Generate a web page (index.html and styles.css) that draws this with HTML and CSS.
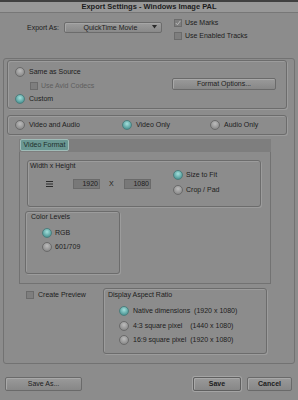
FILE: index.html
```html
<!DOCTYPE html>
<html>
<head>
	<title>Export Settings</title>
	<meta charset="utf-8" />
    <link rel="stylesheet" href="styles.css">
</head>
<body>
    <div class="title">Export Settings - Windows Image PAL</div>

    <div class="head">
        <div class="lbl">Export As:</div>
        <div class="select">
            <span class="select-text">QuickTime Movie</span>
            <svg class="arrow" width="5" height="4" viewBox="0 0 5 4"><path d="M0 0 H5 L2.5 3.5 Z" fill="#2a2a2a"/></svg>
        </div>
        <div class="checks">
            <div class="row">
                <span class="cb on"><svg width="6" height="6" viewBox="0 0 6 6"><path d="M0.8 3 L2.4 4.8 L5.4 0.8" fill="none" stroke="#b9b9b9" stroke-width="1"/></svg></span>
                Use Marks
            </div>
            <div class="row"><span class="cb"></span>Use Enabled Tracks</div>
        </div>
    </div>

    <div class="panel">
        <div class="box source">
            <div class="opts">
                <div class="row"><span class="radio"></span>Same as Source</div>
                <div class="row sub off"><span class="cb"></span>Use Avid Codecs</div>
                <div class="row"><span class="radio on"></span>Custom</div>
            </div>
            <div class="btn options">Format Options...</div>
        </div>

        <div class="box tracks">
            <div class="row"><span class="radio"></span>Video and Audio</div>
            <div class="row"><span class="radio on"></span>Video Only</div>
            <div class="row"><span class="radio"></span>Audio Only</div>
        </div>

        <div class="tabs"><div class="tab">Video Format</div></div>
        <div class="tabbody">
            <div class="box wh">
                <div class="wh-left">
                    <div class="cap">Width x Height</div>
                    <div class="sizes">
                        <svg class="lock" width="7" height="6" viewBox="0 0 7 6"><path d="M0 0.5 H7 M0 3 H7 M0 5.5 H7" stroke="#2a2a2a" stroke-width="1"/></svg>
                        <div class="num">1920</div>
                        <span class="x">X</span>
                        <div class="num">1080</div>
                    </div>
                </div>
                <div class="wh-right">
                    <div class="row"><span class="radio on"></span>Size to Fit</div>
                    <div class="row"><span class="radio"></span>Crop / Pad</div>
                </div>
            </div>

            <div class="box levels">
                <div class="cap">Color Levels</div>
                <div class="list">
                    <div class="row"><span class="radio on"></span>RGB</div>
                    <div class="row"><span class="radio"></span>601/709</div>
                </div>
            </div>
        </div>

        <div class="lower">
            <div class="preview">
                <div class="row"><span class="cb"></span>Create Preview</div>
            </div>
            <div class="box aspect">
                <div class="cap">Display Aspect Ratio</div>
                <div class="list">
                    <div class="row"><span class="radio on"></span><span class="pre">Native dimensions  (1920 x 1080)</span></div>
                    <div class="row"><span class="radio"></span><span class="pre">4:3 square pixel    (1440 x 1080)</span></div>
                    <div class="row"><span class="radio"></span><span class="pre">16:9 square pixel  (1920 x 1080)</span></div>
                </div>
            </div>
        </div>
    </div>

    <div class="foot">
        <div class="btn save-as">Save As...</div>
        <div class="btn save">Save</div>
        <div class="btn cancel">Cancel</div>
    </div>
</body>
</html>
```

FILE: styles.css
```css
body {
    margin: 0;
    width: 298px;
    height: 400px;
    overflow: hidden;
    background: #8c8c8c;
    color: #1c1c1c;
    font-family: "Liberation Sans", Arial, sans-serif;
    font-size: 7px;
    line-height: 8px;
}

/* title bar */
.title {
    height: 10px;
    border-top: 2px solid #404040;
    border-bottom: 1px solid #777;
    background: #989898;
    text-align: center;
    font-weight: bold;
    font-size: 7.5px;
    line-height: 10px;
}

/* export as row */
.head {
    display: flex;
    align-items: flex-start;
    height: 45px;
    padding-left: 27px;
}
.head .lbl {
    margin-top: 11px;
}
.select {
    display: flex;
    align-items: center;
    margin: 9px 0 0 5px;
    width: 98px;
    height: 11px;
    box-sizing: border-box;
    border: 1px solid #6c6c6c;
    border-radius: 2px;
    background: linear-gradient(#9c9c9c, #898989);
    box-shadow: inset 1px 1px 0 #a6a6a6;
}
.select-text {
    flex: 1;
    text-align: center;
    padding-left: 4px;
}
.arrow {
    margin-right: 4px;
    margin-top: -2px;
}
.checks {
    display: flex;
    flex-direction: column;
    gap: 4px;
    margin: 5px 0 0 12px;
}
.checks .row {
    gap: 3px;
}

/* common bits */
.row {
    display: flex;
    align-items: center;
    gap: 4px;
    height: 9px;
    white-space: nowrap;
}
.radio {
    flex: none;
    width: 10px;
    height: 10px;
    box-sizing: border-box;
    border: 1px solid #6a6a6a;
    border-radius: 50%;
    background: radial-gradient(circle at 50% 35%, #bcbcbc, #8c8c8c 75%);
}
.radio.on {
    border-color: #4d7d7c;
    background: radial-gradient(circle at 50% 35%, #a4e0dc, #4f9897 75%);
}
.cb {
    flex: none;
    display: flex;
    align-items: center;
    justify-content: center;
    width: 8px;
    height: 8px;
    box-sizing: border-box;
    border: 1px solid #6b6b6b;
    background: #7e7e7e;
}
.box {
    box-sizing: border-box;
    border: 1px solid #6c6c6c;
    border-radius: 3px;
    box-shadow: 1px 1px 0 #9c9c9c, inset 1px 1px 0 #9c9c9c;
}
.btn {
    display: flex;
    align-items: center;
    justify-content: center;
    box-sizing: border-box;
    border: 1px solid #6a6a6a;
    border-radius: 2px;
    background: linear-gradient(#9a9a9a, #878787);
    box-shadow: inset 1px 1px 0 #a8a8a8;
}
.cap {
    white-space: nowrap;
}
.pre {
    white-space: pre;
}

/* main panel */
.panel {
    margin: 0 3px;
    height: 306px;
    box-sizing: border-box;
    border: 1px solid #727272;
    border-radius: 3px;
    padding: 1px 7px 0 3px;
}
.source {
    display: flex;
    height: 49px;
    padding: 5px 0 0 7px;
}
.opts {
    display: flex;
    flex-direction: column;
    gap: 1.5px;
}
.opts .row {
    height: 12px;
}
.opts .sub {
    padding-left: 15px;
    height: 12px;
    gap: 3px;
}
.off {
    color: #5e5e5e;
}
.options {
    margin: 12px 10px 0 auto;
    width: 104px;
    height: 12px;
}
.tracks {
    display: grid;
    grid-template-columns: 107px 88px auto;
    align-items: center;
    margin-top: 6px;
    height: 20px;
    padding-left: 7px;
}

/* tab */
.tabs {
    margin: 4px 16px 0 12px;
    height: 13px;
    padding-left: 1px;
    background: #7e7e7e;
}
.tab {
    width: 49px;
    height: 12px;
    box-sizing: border-box;
    border: 1px solid #a0bcb8;
    border-radius: 2px;
    background: #6a9792;
    color: #1d2e2c;
    text-align: center;
    line-height: 10px;
}
.tabbody {
    margin: 0 16px 0 12px;
    height: 132px;
    box-sizing: border-box;
    border: 1px solid #727272;
    border-top: none;
    padding: 8px 0 0 5px;
}
.wh {
    display: flex;
    height: 47px;
    margin: 0 9px 0 2px;
    padding: 1px 0 0 2px;
}
.wh-left {
    width: 143px;
}
.sizes {
    display: flex;
    align-items: center;
    height: 10px;
    margin-top: 9px;
}
.lock {
    margin-left: 16px;
}
.num {
    width: 27px;
    height: 10px;
    box-sizing: border-box;
    margin-left: 20px;
    padding-right: 1px;
    border: 1px solid #6a6a6a;
    background: #787878;
    text-align: right;
}
.x {
    margin: 0 1px 0 9px;
    width: 5px;
}
.sizes .x + .num {
    margin-left: 9px;
}
.wh-right {
    display: flex;
    flex-direction: column;
    gap: 5px;
    padding-top: 8px;
}
.wh-right .row {
    height: 10px;
    gap: 3px;
}
.levels {
    margin-top: 4px;
    width: 95px;
    height: 63px;
    padding: 1px 0 0 5px;
}
.levels .list {
    display: flex;
    flex-direction: column;
    gap: 4px;
    margin: 7px 0 0 11px;
}
.levels .row {
    height: 10px;
    gap: 3px;
}

/* preview + aspect */
.lower {
    display: flex;
    align-items: flex-start;
}
.preview {
    width: 77px;
    padding: 7px 0 0 19px;
}
.preview .row {
    height: 8px;
}
.aspect {
    margin-top: 4px;
    width: 164px;
    height: 66px;
    padding: 2px 0 0 4px;
}
.aspect .list {
    display: flex;
    flex-direction: column;
    gap: 4.5px;
    margin: 7px 0 0 11px;
}
.aspect .row {
    height: 10px;
}

/* bottom buttons */
.foot {
    display: flex;
    gap: 6px;
    padding: 13px 6px 0 5px;
}
.foot .btn {
    height: 14px;
}
.save-as {
    width: 77px;
}
.save {
    margin-left: auto;
    width: 48px;
    font-weight: bold;
    border-color: #5f5f5f;
    box-shadow: 0 0 0 1px #a4a4a4, inset 1px 1px 0 #a8a8a8;
}
.cancel {
    width: 45px;
    font-weight: bold;
}
```
